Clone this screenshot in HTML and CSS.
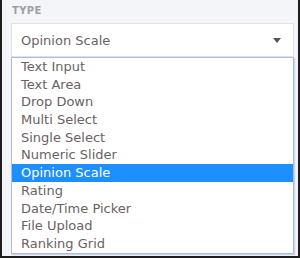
FILE: index.html
```html
<!DOCTYPE html>
<html lang="en">
<head>
    <meta charset="UTF-8">
    <meta name="viewport" content="width=device-width, initial-scale=1.0">
    <title>Question Type</title>
    <link rel="stylesheet" href="styles.css">
</head>

<body>
    <div class="field">
        <div class="field-label">TYPE</div>
        <div class="select-wrap">
            <div class="select-box">
                <span class="select-value">Opinion Scale</span>
                <span class="select-arrow"></span>
            </div>
            <!-- open dropdown list -->
            <ul class="options">
                <li>Text Input</li>
                <li>Text Area</li>
                <li>Drop Down</li>
                <li>Multi Select</li>
                <li>Single Select</li>
                <li>Numeric Slider</li>
                <li class="selected">Opinion Scale</li>
                <li>Rating</li>
                <li>Date/Time Picker</li>
                <li>File Upload</li>
                <li>Ranking Grid</li>
            </ul>
        </div>
        <div class="below"></div>
    </div>
</body>
</html>
```

FILE: styles.css
```css
html, body {
    margin: 0;
    padding: 0;
}

body {
    width: 300px;
    height: 258px;
    box-sizing: border-box;
    background-color: #f3f5f8;
    border-left: 2px solid #1e1e1e;
    border-right: 2px solid #1e1e1e;
    border-bottom: 2px solid #1e1e1e;
    font-family: "DejaVu Sans", Verdana, sans-serif;
    overflow: hidden;
}

.field {
    padding: 5px 4px 0 9px;
}

.field-label {
    font-size: 10px;
    font-weight: bold;
    line-height: 12px;
    letter-spacing: 0.4px;
    color: #a0a0a0;
    padding-left: 1px;
    margin-bottom: 6px;
}

.select-wrap {
    position: relative;
}

.select-box {
    display: flex;
    align-items: center;
    justify-content: space-between;
    height: 32px;
    background: #fff;
    border: 1px solid #dde2e8;
    padding: 0 12px 0 9px;
}

.select-value {
    font-size: 13px;
    color: #6a6262;
}

.select-arrow {
    width: 0;
    height: 0;
    border-left: 4px solid transparent;
    border-right: 4px solid transparent;
    border-top: 5px solid #555;
}

.options {
    position: absolute;
    top: 100%;
    left: 0;
    width: 281px;
    margin: 0;
    padding: 0;
    list-style: none;
    background: #fff;
    border: 1px solid #a9bde6;
    box-shadow: 1px 1px 1px rgba(120, 150, 210, 0.35);
    z-index: 2;
}

.options li {
    height: 17.7px;
    line-height: 17.7px;
    padding-left: 9px;
    font-size: 13px;
    color: #6a6262;
}

.options li.selected {
    background-color: #1e8fff;
    color: #fff;
}

.below {
    margin-top: 176px;
    border-top: 1px solid #dfe2e6;
}
```
